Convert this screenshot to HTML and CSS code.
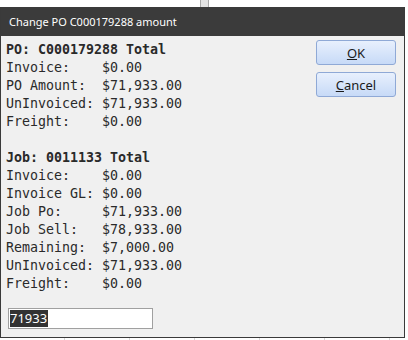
FILE: index.html
```html
<!DOCTYPE html>
<html lang="en">
<head>
    <meta charset="UTF-8">
    <title>Change PO amount</title>
    <link rel="stylesheet" href="styles.css">
</head>
<body>
    <div class="strip">
        <span class="strip-cell"></span>
        <span class="strip-sep"></span>
        <span class="strip-cell"></span>
    </div>
    <div class="dialog">
        <div class="titlebar">Change PO C000179288 amount</div>
        <div class="content">
            <div class="main">
<pre class="report"><b>PO: C000179288 Total</b>
Invoice:    $0.00
PO Amount:  $71,933.00
UnInvoiced: $71,933.00
Freight:    $0.00

<b>Job: 0011133 Total</b>
Invoice:    $0.00
Invoice GL: $0.00
Job Po:     $71,933.00
Job Sell:   $78,933.00
Remaining:  $7,000.00
UnInvoiced: $71,933.00
Freight:    $0.00</pre>
                <div class="amount"><span class="sel">71933</span></div>
            </div>
            <div class="buttons">
                <button class="btn"><u>O</u>K</button>
                <button class="btn"><u>C</u>ancel</button>
            </div>
        </div>
    </div>
</body>
</html>
```

FILE: styles.css
```css
*{
    margin: 0;
    padding: 0;
    box-sizing: border-box;
}
body{
    width: 408px;
    height: 340px;
    overflow: hidden;
    background-color: #fff;
    background-image: repeating-linear-gradient(90deg, transparent 0, transparent 64px, #d8d8d8 64px, #d8d8d8 65px);
    font-family: "Noto Sans", "Liberation Sans", sans-serif;
}
.strip{
    height: 7px;
    display: flex;
    background: #fff;
}
.strip-cell{
    flex: 1;
}
.strip-sep{
    width: 9px;
    background: #e4e4e4;
    border-left: 1px solid #aaa;
    border-right: 1px solid #aaa;
}
.dialog{
    width: 405px;
    height: 331px;
    background: #f0f0f0;
    border: 1px solid #3a3a3a;
    border-top: none;
    display: flex;
    flex-direction: column;
}
.titlebar{
    height: 29px;
    background: #3b3b3b;
    color: #fff;
    font-size: 11px;
    line-height: 29px;
    padding-left: 8px;
}
.content{
    flex: 1;
    display: flex;
}
.main{
    flex: 1;
    padding: 5px 0 0 5px;
}
.report{
    font-family: "DejaVu Sans Mono", "Liberation Mono", monospace;
    font-size: 13.3px;
    line-height: 18px;
    color: #2a2a2a;
}
.report b{
    font-weight: bold;
}
.amount{
    width: 145px;
    height: 21px;
    margin: 15px 0 0 2px;
    background: #fff;
    border: 1px solid #a0a0a0;
    padding: 1px 0 0 1px;
    font-size: 13px;
    line-height: 17px;
}
.sel{
    display: inline-block;
    background: #333;
    color: #fff;
    padding-right: 1px;
}
.buttons{
    width: 80px;
    margin: 4px 8px 0 0;
    display: flex;
    flex-direction: column;
    gap: 7px;
}
.btn{
    height: 25px;
    border: 1px solid #8fa9d6;
    border-radius: 3px;
    background: linear-gradient(#e8f0fd, #c7daf7);
    font-family: "Noto Sans", "Liberation Sans", sans-serif;
    font-size: 13px;
    color: #1a1a1a;
}
```
